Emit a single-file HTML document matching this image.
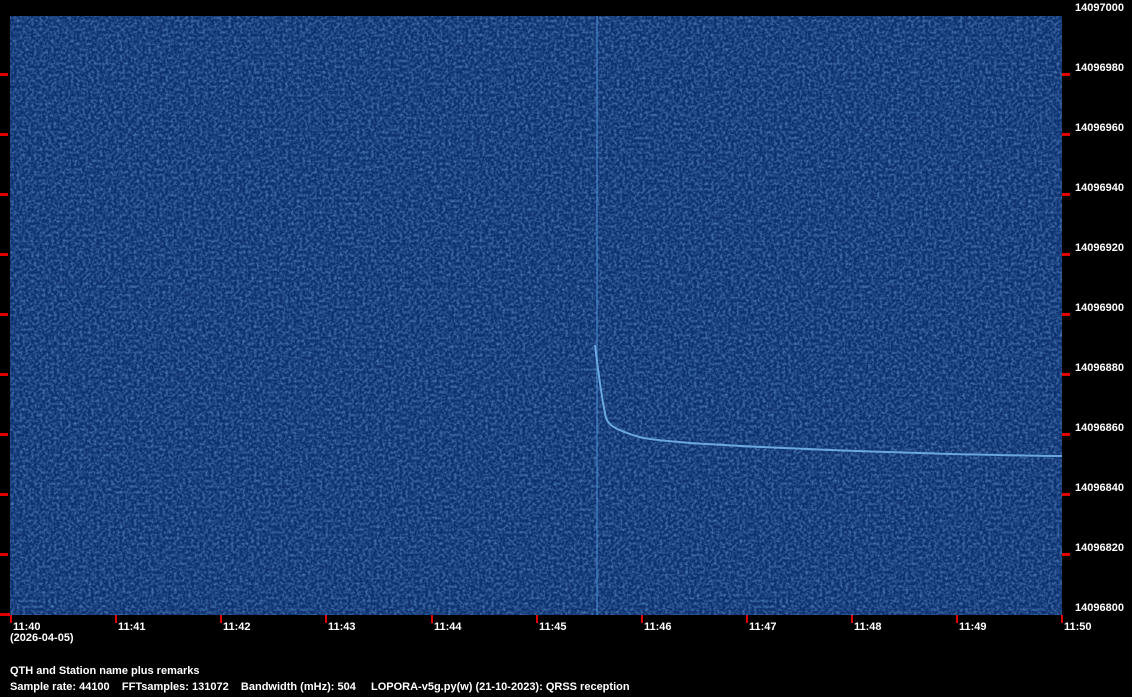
<!DOCTYPE html>
<html><head><meta charset="utf-8"><style>
html,body{margin:0;padding:0;background:#000;width:1132px;height:697px;overflow:hidden}
svg{display:block}
text{font-family:"Liberation Sans",sans-serif;font-weight:bold;font-size:11px;fill:#fff}
</style></head><body>
<svg width="1132" height="697" xmlns="http://www.w3.org/2000/svg">
<defs>
<filter id="t" x="0" y="0" width="100%" height="100%" filterUnits="objectBoundingBox">
<feTurbulence type="fractalNoise" baseFrequency="0.35" numOctaves="2" seed="7"/>
<feColorMatrix type="matrix" values="0 0 0 0 0.15 0 0 0 0 0.36 0 0 0 0 0.68 0 0 0 1.3 -0.5"/></filter>
</defs>
<rect x="10" y="16" width="1052" height="599" fill="#0d3270"/>
<rect x="10" y="16" width="1052" height="599" filter="url(#t)"/>
<line x1="597" y1="16" x2="597" y2="615" stroke="#4a88cc" stroke-width="1.5" opacity="0.75"/>
<path d="M595,345 C598,370 602,400 606,418 C610,428 620,430 630,434 C645,440 660,440 690,443 C750,447 850,451 950,454 C1000,455 1040,456 1062,456" fill="none" stroke="#6aa6e0" stroke-width="2"/>
<g fill="#e00000">
<rect x="0" y="73" width="8" height="3"/><rect x="0" y="133" width="8" height="3"/><rect x="0" y="193" width="8" height="3"/><rect x="0" y="253" width="8" height="3"/><rect x="0" y="313" width="8" height="3"/><rect x="0" y="373" width="8" height="3"/><rect x="0" y="433" width="8" height="3"/><rect x="0" y="493" width="8" height="3"/><rect x="0" y="553" width="8" height="3"/><rect x="0" y="613" width="10" height="3"/>
<rect x="1062" y="73" width="8" height="3"/><rect x="1062" y="133" width="8" height="3"/><rect x="1062" y="193" width="8" height="3"/><rect x="1062" y="253" width="8" height="3"/><rect x="1062" y="313" width="8" height="3"/><rect x="1062" y="373" width="8" height="3"/><rect x="1062" y="433" width="8" height="3"/><rect x="1062" y="493" width="8" height="3"/><rect x="1062" y="553" width="8" height="3"/>
<rect x="10" y="615" width="2" height="8"/><rect x="115" y="615" width="2" height="8"/><rect x="220" y="615" width="2" height="8"/><rect x="325" y="615" width="2" height="8"/><rect x="431" y="615" width="2" height="8"/><rect x="536" y="615" width="2" height="8"/><rect x="641" y="615" width="2" height="8"/><rect x="746" y="615" width="2" height="8"/><rect x="851" y="615" width="2" height="8"/><rect x="956" y="615" width="2" height="8"/><rect x="1061" y="615" width="2" height="8"/>
</g>
<g>
<text x="1075" y="11">14097000</text><text x="1075" y="71">14096980</text><text x="1075" y="131">14096960</text><text x="1075" y="191">14096940</text><text x="1075" y="251">14096920</text><text x="1075" y="311">14096900</text><text x="1075" y="371">14096880</text><text x="1075" y="431">14096860</text><text x="1075" y="491">14096840</text><text x="1075" y="551">14096820</text><text x="1075" y="611">14096800</text>
</g>
<g>
<text x="13" y="630">11:40</text><text x="118" y="630">11:41</text><text x="223" y="630">11:42</text><text x="328" y="630">11:43</text><text x="434" y="630">11:44</text><text x="539" y="630">11:45</text><text x="644" y="630">11:46</text><text x="749" y="630">11:47</text><text x="854" y="630">11:48</text><text x="959" y="630">11:49</text><text x="1064" y="630">11:50</text>
<text x="10" y="641">(2026-04-05)</text>
<text x="10" y="674">QTH and Station name plus remarks</text>
<text x="10" y="690" xml:space="preserve">Sample rate: 44100    FFTsamples: 131072    Bandwidth (mHz): 504</text>
<text x="371" y="690">LOPORA-v5g.py(w) (21-10-2023): QRSS reception</text>
</g>
</svg>
</body></html>
